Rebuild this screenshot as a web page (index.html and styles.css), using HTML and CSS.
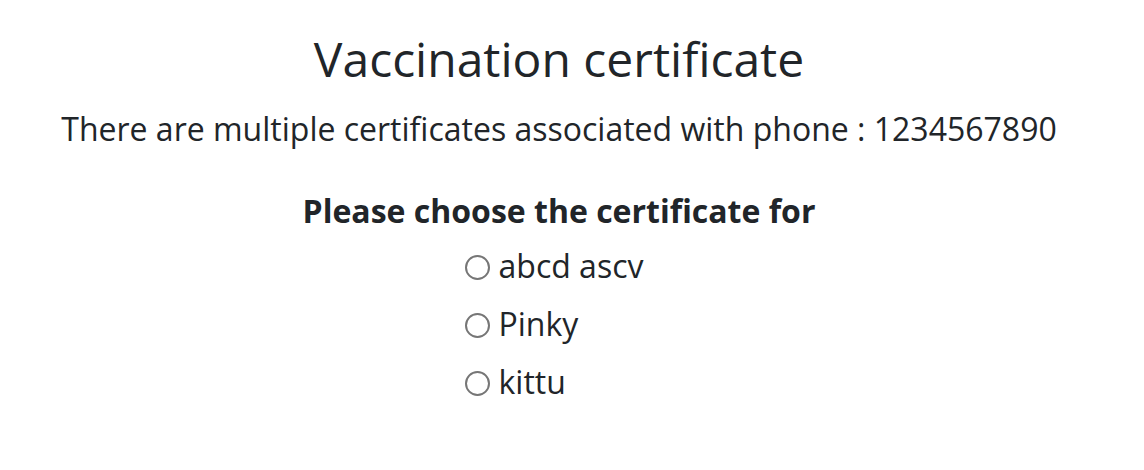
FILE: index.html
```html
<!DOCTYPE html>
<html>
<head>
<meta charset="utf-8">
<link rel="stylesheet" href="styles.css">
</head>
<body>
<div class="page">
  <h1 class="title">Vaccination certificate</h1>
  <p class="subtitle">There are multiple certificates associated with phone : 1234567890</p>
  <div class="chooser">
    <p class="prompt">Please choose the certificate for</p>
    <div class="options">
      <label class="option"><span class="radio"></span><span>abcd ascv</span></label>
      <label class="option"><span class="radio"></span><span>Pinky</span></label>
      <label class="option"><span class="radio"></span><span>kittu</span></label>
    </div>
  </div>
</div>
</body>
</html>
```
FILE: styles.css
```css
html, body { margin: 0; padding: 0; background: #fff; }
body { font-family: "Open Sans", sans-serif; color: #212529; }
.page { display: flex; flex-direction: column; align-items: center; padding: 30px 26px 0 0; }
.title { font-size: 48px; font-weight: 400; margin: 0; line-height: 58px; }
.subtitle { font-size: 32px; margin: 17px 0 0; line-height: 48px; }
.chooser { display: flex; flex-direction: column; align-items: center; margin-top: 34px; }
.prompt { font-size: 32px; font-weight: 700; margin: 0; line-height: 48px; }
.options { display: flex; flex-direction: column; gap: 10px; margin-top: 7px; padding-right: 10px; }
.option { display: flex; align-items: center; gap: 9px; font-size: 32px; line-height: 48px; }
.radio { width: 25px; height: 25px; margin-top: 3px; border: 2px solid #767676; border-radius: 50%; box-sizing: border-box; }
```
